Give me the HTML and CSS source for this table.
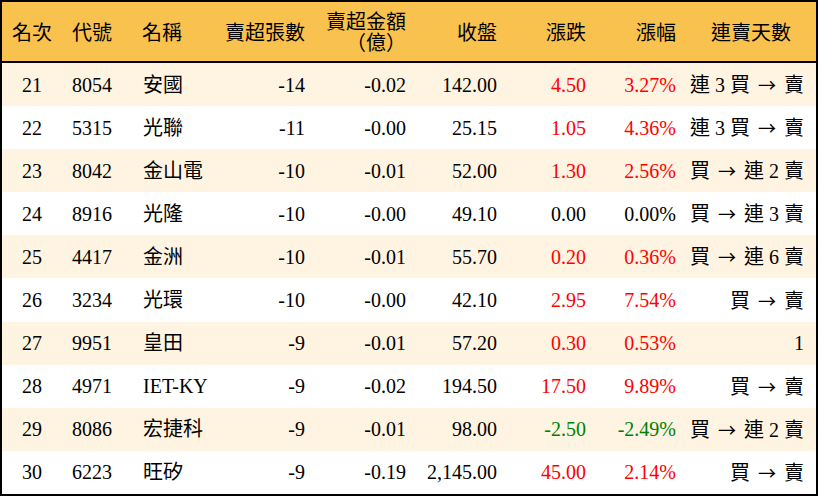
FILE: index.html
```html
<!DOCTYPE html>
<html lang="zh-Hant">
<head>
<meta charset="utf-8">
<title>賣超排行</title>
<link rel="stylesheet" href="styles.css">
</head>
<body>
<div class="board">
  <div class="head">
    <div class="c center">名次</div>
    <div class="c left">代號</div>
    <div class="c left">名稱</div>
    <div class="c right">賣超張數</div>
    <div class="c right two">賣超金額<br>（億）</div>
    <div class="c right">收盤</div>
    <div class="c right">漲跌</div>
    <div class="c right">漲幅</div>
    <div class="c center">連賣天數</div>
  </div>
  <div class="row odd">
    <div class="c center">21</div><div class="c left">8054</div><div class="c left">安國</div>
    <div class="c right">-14</div><div class="c right">-0.02</div><div class="c right">142.00</div>
    <div class="c right up">4.50</div><div class="c right up">3.27%</div><div class="c right">連 3 買 <span class="ar">→</span> 賣</div>
  </div>
  <div class="row">
    <div class="c center">22</div><div class="c left">5315</div><div class="c left">光聯</div>
    <div class="c right">-11</div><div class="c right">-0.00</div><div class="c right">25.15</div>
    <div class="c right up">1.05</div><div class="c right up">4.36%</div><div class="c right">連 3 買 <span class="ar">→</span> 賣</div>
  </div>
  <div class="row odd">
    <div class="c center">23</div><div class="c left">8042</div><div class="c left">金山電</div>
    <div class="c right">-10</div><div class="c right">-0.01</div><div class="c right">52.00</div>
    <div class="c right up">1.30</div><div class="c right up">2.56%</div><div class="c right">買 <span class="ar">→</span> 連 2 賣</div>
  </div>
  <div class="row">
    <div class="c center">24</div><div class="c left">8916</div><div class="c left">光隆</div>
    <div class="c right">-10</div><div class="c right">-0.00</div><div class="c right">49.10</div>
    <div class="c right">0.00</div><div class="c right">0.00%</div><div class="c right">買 <span class="ar">→</span> 連 3 賣</div>
  </div>
  <div class="row odd">
    <div class="c center">25</div><div class="c left">4417</div><div class="c left">金洲</div>
    <div class="c right">-10</div><div class="c right">-0.01</div><div class="c right">55.70</div>
    <div class="c right up">0.20</div><div class="c right up">0.36%</div><div class="c right">買 <span class="ar">→</span> 連 6 賣</div>
  </div>
  <div class="row">
    <div class="c center">26</div><div class="c left">3234</div><div class="c left">光環</div>
    <div class="c right">-10</div><div class="c right">-0.00</div><div class="c right">42.10</div>
    <div class="c right up">2.95</div><div class="c right up">7.54%</div><div class="c right">買 <span class="ar">→</span> 賣</div>
  </div>
  <div class="row odd">
    <div class="c center">27</div><div class="c left">9951</div><div class="c left">皇田</div>
    <div class="c right">-9</div><div class="c right">-0.01</div><div class="c right">57.20</div>
    <div class="c right up">0.30</div><div class="c right up">0.53%</div><div class="c right">1</div>
  </div>
  <div class="row">
    <div class="c center">28</div><div class="c left">4971</div><div class="c left">IET-KY</div>
    <div class="c right">-9</div><div class="c right">-0.02</div><div class="c right">194.50</div>
    <div class="c right up">17.50</div><div class="c right up">9.89%</div><div class="c right">買 <span class="ar">→</span> 賣</div>
  </div>
  <div class="row odd">
    <div class="c center">29</div><div class="c left">8086</div><div class="c left">宏捷科</div>
    <div class="c right">-9</div><div class="c right">-0.01</div><div class="c right">98.00</div>
    <div class="c right down">-2.50</div><div class="c right down">-2.49%</div><div class="c right">買 <span class="ar">→</span> 連 2 賣</div>
  </div>
  <div class="row">
    <div class="c center">30</div><div class="c left">6223</div><div class="c left">旺矽</div>
    <div class="c right">-9</div><div class="c right">-0.19</div><div class="c right">2,145.00</div>
    <div class="c right up">45.00</div><div class="c right up">2.14%</div><div class="c right">買 <span class="ar">→</span> 賣</div>
  </div>
</div>
</body>
</html>
```

FILE: styles.css
```css
html, body {
  margin: 0;
  padding: 0;
  background: #ffffff;
}

.board {
  width: 818px;
  height: 496px;
  box-sizing: border-box;
  border: 2px solid #000000;
  font-family: "Liberation Serif", "Noto Sans CJK TC", serif;
  font-size: 20px;
  color: #000000;
}

.head,
.row {
  display: grid;
  grid-template-columns: 60px 70px 83px 100px 101px 91px 89px 90px 130px;
  align-items: center;
}

.head {
  height: 61px;
  box-sizing: border-box;
  border-bottom: 2px solid #000000;
  background: #f9c24f;
  padding-top: 2px;
}

.row {
  height: 43.1px;
  background: #ffffff;
}

.row.odd {
  background: #fef4e1;
}

.c {
  white-space: nowrap;
  line-height: 22px;
}

.center {
  text-align: center;
}

.left {
  text-align: left;
  padding-left: 10px;
}

.right {
  text-align: right;
  padding-right: 10px;
}

.row .c:nth-child(3) {
  padding-left: 11px;
}

.row .c:last-child {
  padding-right: 12px;
}

.ar {
  font-family: "Noto Sans CJK TC", sans-serif;
  font-size: 18px;
  margin: 0 3px;
}

.two {
  line-height: 21px;
}

.up {
  color: #ff0000;
}

.down {
  color: #008000;
}
```
